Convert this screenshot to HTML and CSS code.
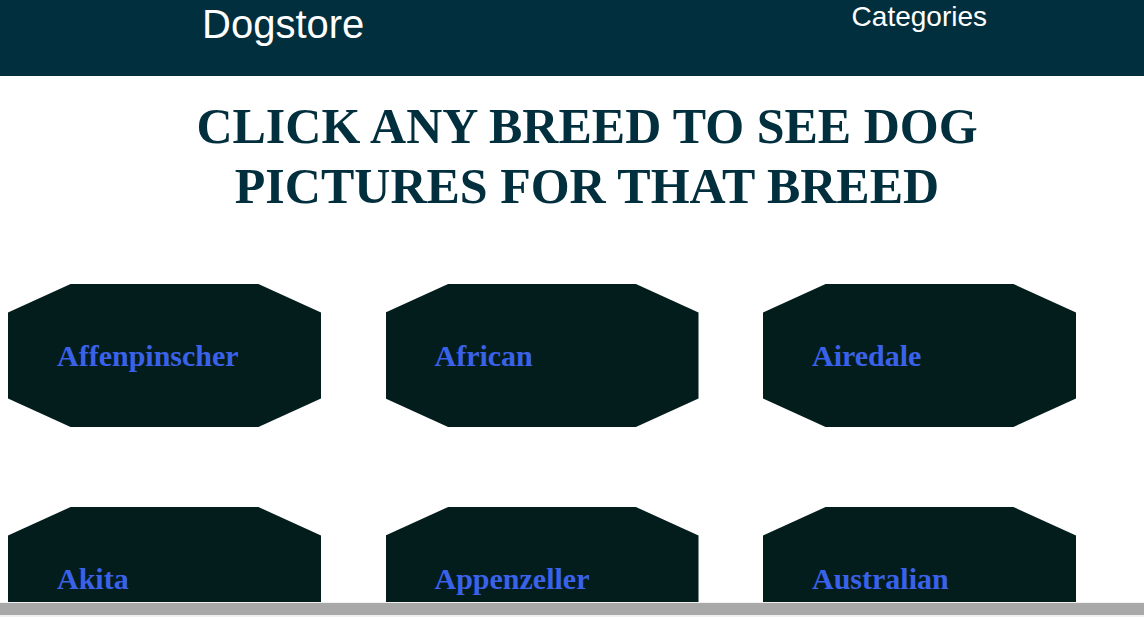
FILE: index.html
```html
<!DOCTYPE html>
<html lang="en">
<head>
<meta charset="utf-8">
<title>Dogstore</title>
<link rel="stylesheet" href="styles.css">
</head>
<body>
<header class="topbar">
  <a class="brand" href="#">Dogstore</a>
  <a class="nav-link" href="#">Categories</a>
</header>
<main class="content">
  <h1 class="title">CLICK ANY BREED TO SEE DOG PICTURES FOR THAT BREED</h1>
  <div class="breeds">
    <a class="breed" href="#"><span>Affenpinscher</span></a>
    <a class="breed" href="#"><span>African</span></a>
    <a class="breed" href="#"><span>Airedale</span></a>
    <a class="breed" href="#"><span>Akita</span></a>
    <a class="breed" href="#"><span>Appenzeller</span></a>
    <a class="breed" href="#"><span>Australian</span></a>
  </div>
</main>
<div class="hbar"><div class="hbar-thumb"></div></div>
</body>
</html>
```

FILE: styles.css
```css
html {
  overflow: hidden;
}
body {
  margin: 0;
  background: #ffffff;
  font-family: "Liberation Serif", "Times New Roman", serif;
}
.topbar {
  height: 76px;
  background: #022f3e;
  display: flex;
  align-items: flex-start;
  justify-content: space-between;
  padding: 0 157px 0 202px;
  box-sizing: border-box;
}
.brand {
  margin-top: 2px;
  font-family: "Liberation Sans", Arial, sans-serif;
  font-size: 40px;
  color: #ffffff;
  text-decoration: none;
}
.nav-link {
  margin-top: 1px;
  font-family: "Liberation Sans", Arial, sans-serif;
  font-size: 28px;
  color: #ffffff;
  text-decoration: none;
}
.content {
  padding: 0 8px;
}
.title {
  width: 900px;
  margin: 20px 0 0 129px;
  font-size: 50px;
  font-weight: bold;
  line-height: 60px;
  text-align: center;
  color: #022f3e;
}
.breeds {
  display: grid;
  grid-template-columns: repeat(3, 313px);
  column-gap: 64.5px;
  row-gap: 80px;
  margin-top: 68px;
}
.breed {
  height: 143px;
  background: #031c1c;
  clip-path: polygon(20% 0, 80% 0, 100% 20%, 100% 80%, 80% 100%, 20% 100%, 0 80%, 0 20%);
  display: flex;
  align-items: center;
  padding: 0 0 0 49px;
  box-sizing: border-box;
  text-decoration: none;
  color: #3a62e8;
  font-size: 30px;
  font-weight: bold;
}
.hbar {
  position: fixed;
  left: 0;
  right: 0;
  bottom: 0;
  height: 15px;
  padding: 1px 0 2px;
  box-sizing: border-box;
  background: #f1f1f1;
}
.hbar-thumb {
  height: 12px;
  background: #a8a8a8;
}
```
